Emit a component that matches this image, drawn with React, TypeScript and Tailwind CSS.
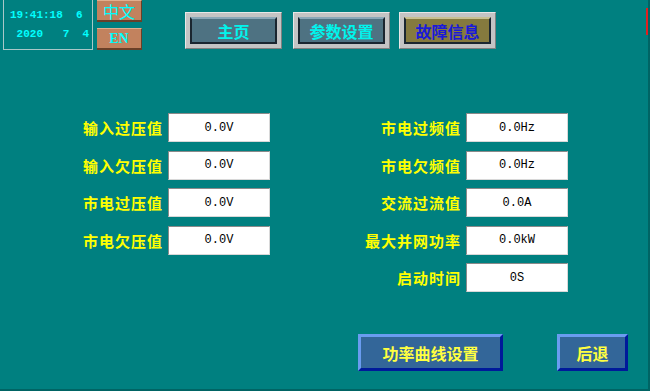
import React from "react";

const cjk = { fontFamily: '"Noto Sans CJK SC", "Noto Sans", sans-serif' };
const mono = { fontFamily: '"Liberation Mono", "DejaVu Sans Mono", monospace' };

function NavBtn({ label, active }: { label: string; active?: boolean }) {
  return (
    <div className="w-[97px] h-[37px] p-[4px] bg-[#c4c4c4] border-t border-l border-t-[#e8e8e8] border-l-[#e8e8e8] border-b border-r border-b-[#808080] border-r-[#808080]">
      <div
        className={
          "w-full h-full flex items-center justify-center border-2 border-[#1a2630] text-[16px] font-bold leading-none " +
          (active
            ? "bg-[#857a3e] text-[#1a1ad8] border-t-[#c8c090]"
            : "bg-[#4e7282] text-[#00f4ec] border-t-[#8aa8b8]")
        }
        style={cjk}
      >
        {label}
      </div>
    </div>
  );
}

function Field({ label, value }: { label: string; value: string }) {
  return (
    <div className="flex items-center h-[29px]">
      <div
        className="w-[100px] text-right text-[#ffff00] text-[15px] font-bold tracking-[1px] leading-none"
        style={cjk}
      >
        {label}
      </div>
      <div
        className="ml-[5px] w-[102px] h-[29px] bg-white border border-t-[#8a8a8a] border-l-[#8a8a8a] border-b-[#d8d8d8] border-r-[#d8d8d8] flex items-center justify-center text-[12px] text-black"
        style={mono}
      >
        {value}
      </div>
    </div>
  );
}

function BlueBtn({ label, w }: { label: string; w: string }) {
  return (
    <div
      className={
        w +
        " h-[37px] bg-[#336699] border-[3px] border-t-[#6a9cf0] border-l-[#6a9cf0] border-b-[#001a9a] border-r-[#001a9a] flex items-center justify-center text-[#ffff40] text-[16px] font-bold leading-none"
      }
      style={cjk}
    >
      {label}
    </div>
  );
}

export default function App() {
  return (
    <div className="relative w-[650px] h-[391px] bg-[#008080] overflow-hidden flex flex-col border-r-2 border-b-2 border-[#006464]">
      <div className="absolute right-0 top-[8px] w-[2px] h-[27px] bg-[#e02020]" />
      {/* header */}
      <div className="flex items-start pl-[3px]">
        <div
          className="w-[90px] h-[50px] border border-t-0 border-[#a8c8c8] flex flex-col justify-center gap-[8px] pl-[6px] text-[11px] font-bold text-[#00ffff] leading-none"
          style={mono}
        >
          <div className="whitespace-pre">19:41:18  6</div>
          <div className="whitespace-pre"> 2020   7  4</div>
        </div>
        <div className="ml-[4px] w-[45px] flex flex-col gap-[6px]">
          <div
            className="h-[22px] bg-[#c2825e] border-b-2 border-r border-b-[#6a4028] border-r-[#6a4028] border-t border-t-[#e0b090] flex items-center justify-center text-[#00ffff] text-[16px] leading-none"
            style={cjk}
          >
            中文
          </div>
          <div
            className="h-[22px] bg-[#c2825e] border-b-2 border-r border-b-[#6a4028] border-r-[#6a4028] border-t border-t-[#e0b090] flex items-center justify-center text-[#00ffff] text-[14px] font-bold leading-none"
            style={{ fontFamily: '"Liberation Serif", serif' }}
          >
            EN
          </div>
        </div>
        <div className="ml-[43px] mt-[12px] flex">
          <NavBtn label="主页" />
          <div className="ml-[11px]">
            <NavBtn label="参数设置" />
          </div>
          <div className="ml-[9px]">
            <NavBtn label="故障信息" active />
          </div>
        </div>
      </div>

      {/* form */}
      <div className="mt-[63px] flex pl-[63px]">
        <div className="flex flex-col gap-[8.5px]">
          <Field label="输入过压值" value="0.0V" />
          <Field label="输入欠压值" value="0.0V" />
          <Field label="市电过压值" value="0.0V" />
          <Field label="市电欠压值" value="0.0V" />
        </div>
        <div className="ml-[91px] flex flex-col gap-[8.5px]">
          <Field label="市电过频值" value="0.0Hz" />
          <Field label="市电欠频值" value="0.0Hz" />
          <Field label="交流过流值" value="0.0A" />
          <Field label="最大并网功率" value="0.0kW" />
          <Field label="启动时间" value="0S" />
        </div>
      </div>

      {/* bottom buttons */}
      <div className="mt-auto mb-[18px] flex pl-[358px]">
        <BlueBtn label="功率曲线设置" w="w-[145px]" />
        <div className="ml-[54px]">
          <BlueBtn label="后退" w="w-[71px]" />
        </div>
      </div>
    </div>
  );
}
